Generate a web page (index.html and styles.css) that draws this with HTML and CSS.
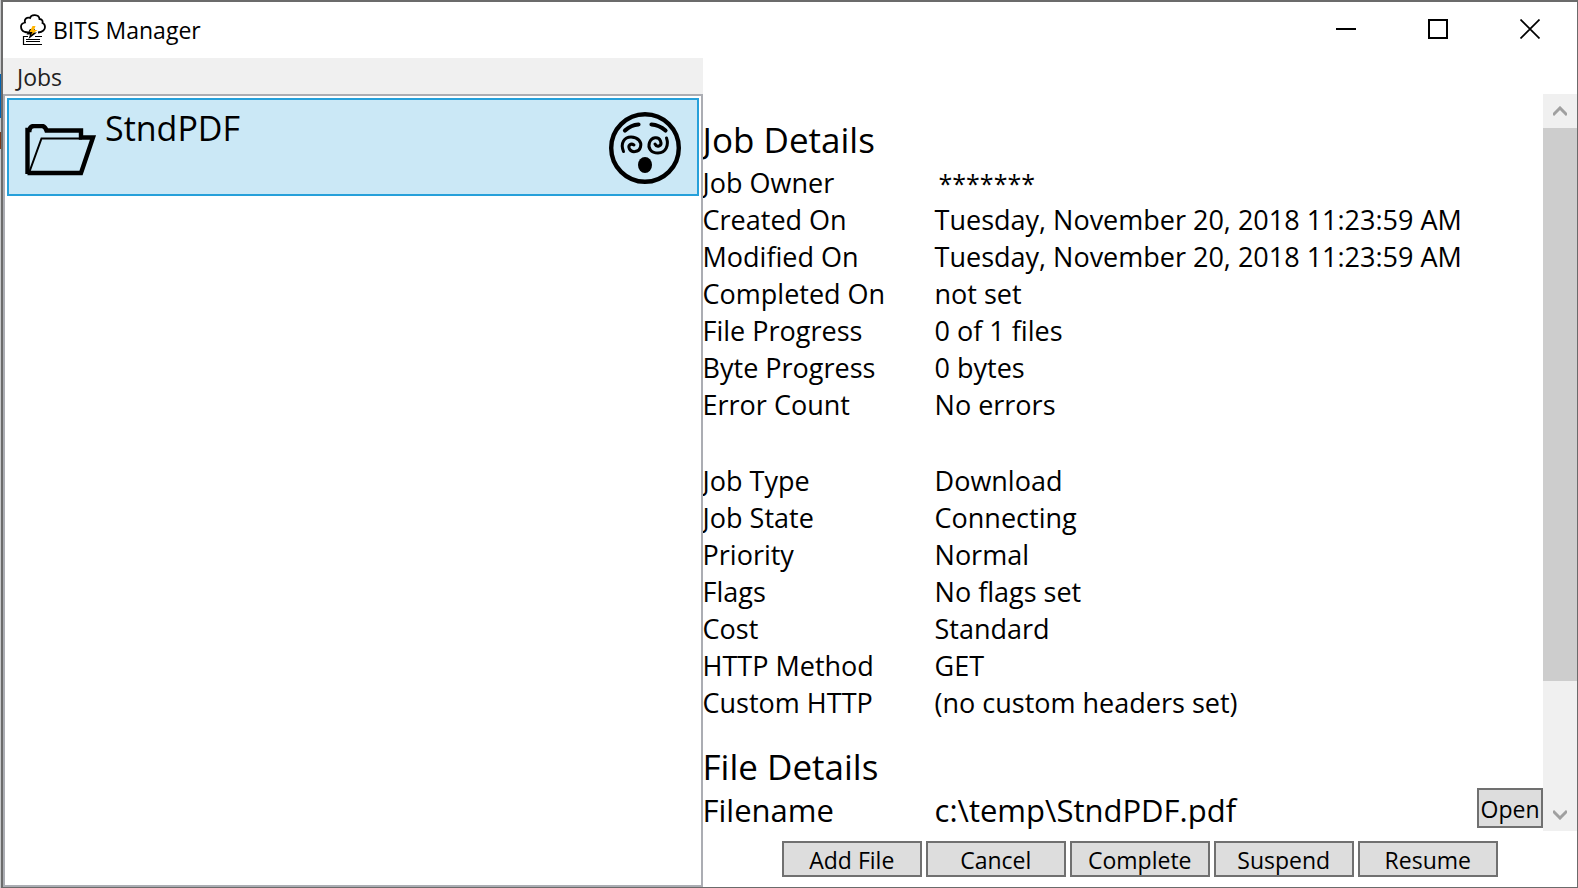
FILE: index.html
```html
<!DOCTYPE html>
<html lang="en">
<head>
<meta charset="utf-8">
<title>BITS Manager</title>
<link rel="stylesheet" href="styles.css">
</head>
<body>
<div class="window">
  <header class="titlebar">
    <svg class="app-icon" viewBox="0 0 26 32" aria-hidden="true">
      <path d="M8 18.500L5 18C2 17 1 15 1 12.500C1 10 3 9 5 8.500C4 5 7 3 10 4C11 0 19 0 19.500 5C22 5 23 7 22.500 9C25 10 25 12 25 13C25 16 22 18 18 18.500" fill="none" stroke="#000" stroke-width="1.800"/>
      <path d="M10 15L6.500 20.500H10L8.500 25L17 18.500H13L15 15Z" fill="#000"/>
      <path d="M12.500 12H15.500L14 16H17.500L11 21L12.500 18H9.500Z" fill="#ffb400"/>
      <path d="M8 22.500H3.500V30.500H22M15 22.500H22M6 25.500H20M6 27.500H20" fill="none" stroke="#000" stroke-width="1.200"/>
    </svg>
    <h1 class="app-title">BITS Manager</h1>
    <div class="caption-buttons">
      <button class="caption" aria-label="Minimize"><svg viewBox="0 0 20 20"><path d="M0 10H20" stroke="#000" stroke-width="2"/></svg></button>
      <button class="caption" aria-label="Maximize"><svg viewBox="0 0 20 20"><path d="M1 1H19V19H1Z" fill="none" stroke="#000" stroke-width="2"/></svg></button>
      <button class="caption" aria-label="Close"><svg viewBox="0 0 20 20"><path d="M.5 .5L19.500 19.500M19.500 .5L.5 19.500" stroke="#000" stroke-width="1.700"/></svg></button>
    </div>
  </header>
  <main class="content">
    <section class="left">
      <nav class="menu"><button class="menu-item">Jobs</button></nav>
      <div class="job-list">
        <button class="job">
          <svg class="folder" viewBox="0 0 72 54" aria-hidden="true">
            <path d="M2.500 50V6H4.500Q5 2 9 2H17Q20 2 21.500 6.500H56V13.500H68L56 49H2.500" fill="none" stroke="#000" stroke-width="4.400"/>
            <path d="M4 49L16.500 14.500H57" fill="none" stroke="#000" stroke-width="2"/>
          </svg>
          <span class="job-name">StndPDF</span>
          <svg class="face" viewBox="0 0 72 72" aria-label="Connecting">
            <g fill="none" stroke="#000" stroke-linecap="round">
              <circle cx="36" cy="36" r="33.800" stroke-width="4.400"/>
              <path d="M16 18.500Q22 13 29.500 12.500M42.500 12.500Q50 13 56.500 18.500" stroke-width="4.200"/>
              <path d="M14.500 39.500C11 31 15.500 25 22 25C29 25 33 30 31.500 35C30 40.500 22.500 41 20.500 37C18.500 33 22 31 25 33" stroke-width="3"/>
              <path d="M57.500 26C60 33 57 41 49 41C42 41 38.500 36 40.500 30.500C42.500 25 49.500 24 51.500 29C53.500 34 48 36 46 32" stroke-width="3"/>
            </g>
            <ellipse cx="36" cy="53" rx="7" ry="8" fill="#000"/>
          </svg>
        </button>
      </div>
    </section>
    <section class="right">
      <div class="scroller">
        <div class="details">
          <h2 class="heading">Job Details</h2>
          <dl class="fields">
            <dt>Job Owner</dt><dd class="masked">*******</dd>
            <dt>Created On</dt><dd>Tuesday, November 20, 2018 11:23:59 AM</dd>
            <dt>Modified On</dt><dd>Tuesday, November 20, 2018 11:23:59 AM</dd>
            <dt>Completed On</dt><dd>not set</dd>
            <dt>File Progress</dt><dd>0 of 1 files</dd>
            <dt>Byte Progress</dt><dd>0 bytes</dd>
            <dt>Error Count</dt><dd>No errors</dd>
          </dl>
          <dl class="fields more">
            <dt>Job Type</dt><dd>Download</dd>
            <dt>Job State</dt><dd>Connecting</dd>
            <dt>Priority</dt><dd>Normal</dd>
            <dt>Flags</dt><dd>No flags set</dd>
            <dt>Cost</dt><dd>Standard</dd>
            <dt>HTTP Method</dt><dd>GET</dd>
            <dt>Custom HTTP</dt><dd>(no custom headers set)</dd>
          </dl>
          <h2 class="heading">File Details</h2>
          <div class="file">
            <span>Filename</span><span>c:\temp\StndPDF.pdf</span>
            <button class="btn open">Open</button>
          </div>
        </div>
        <div class="scrollbar">
          <button class="arrow" aria-label="Scroll up"><svg viewBox="0 0 14 11"><path d="M0 9L7 2L14 9" /></svg></button>
          <div class="track"><div class="thumb"></div></div>
          <button class="arrow" aria-label="Scroll down"><svg viewBox="0 0 14 11"><path d="M0 2L7 9L14 2" /></svg></button>
        </div>
      </div>
      <footer class="actions">
        <button class="btn">Add File</button>
        <button class="btn">Cancel</button>
        <button class="btn">Complete</button>
        <button class="btn">Suspend</button>
        <button class="btn">Resume</button>
      </footer>
    </section>
  </main>
</div>
</body>
</html>
```
FILE: styles.css
```css
* { box-sizing: border-box; }
body {
  margin: 0;
  padding-left: 1px;
  background: linear-gradient(#c8cacc 74px, #0063b1 74px 118px, #c8cacc 118px 132px, #7a3a1c 132px 149px, #c8cacc 149px);
  font-family: "Open Sans", "Noto Sans", sans-serif;
  color: #000;
}
button {
  font: inherit;
  color: inherit;
  border: 0;
  padding: 0;
  background: none;
}
.window {
  display: flex;
  flex-direction: column;
  height: 100vh;
  background: #fff;
  border: solid #6b6b6b;
  border-width: 2px 1px 1px 2px;
}
.titlebar {
  display: flex;
  align-items: center;
  height: 56px;
  flex: none;
  padding-left: 17px;
}
.app-icon { width: 26px; height: 32px; margin-right: 7px; }
.app-title { margin: 0; font-size: 23px; font-weight: 400; }
.caption-buttons { display: flex; margin-left: auto; padding-right: 1px; }
.caption {
  display: flex;
  align-items: center;
  justify-content: center;
  width: 92px;
  height: 56px;
  padding-bottom: 2px;
}
.caption svg { width: 20px; height: 20px; }
.content {
  display: grid;
  grid-template-columns: 4fr 5fr;
  flex: 1;
  min-height: 0;
}
.left, .right { display: flex; flex-direction: column; min-width: 0; min-height: 0; }
.menu { height: 36px; background: #f0f0f0; padding-left: 14px; flex: none; }
.menu-item { font-size: 23px; line-height: 38px; color: #212121; }
.job-list { flex: 1; border: 2px solid #abadb3; padding: 2px; }
.job {
  display: flex;
  align-items: flex-start;
  width: 100%;
  height: 98px;
  padding: 0 16px;
  border: 2px solid #26a0da;
  background: #cbe8f6;
  text-align: left;
}
.folder { width: 72px; height: 54px; margin: 24px 8px 0 0; }
.job-name { flex: 1; font-size: 34px; line-height: 56px; }
.face { width: 72px; height: 72px; margin-top: 12px; }
.right { padding-top: 36px; }
.scroller { display: flex; flex: 1; min-height: 0; }
.details { flex: 1; min-width: 0; overflow: hidden; }
.heading {
  margin: 24px 0 0;
  font-size: 35px;
  font-weight: 400;
  line-height: 43px;
}
.fields {
  display: grid;
  grid-template-columns: 232px 1fr;
  grid-auto-rows: 37px;
  margin: 3px 0 0;
  font-size: 27px;
  line-height: 37px;
}
.more { margin-top: 39px; }
.fields dd { margin: 0; }
.fields .masked { padding: 2px 0 0 4px; font-size: 25px; line-height: 34px; }
.file {
  display: grid;
  grid-template-columns: 232px 1fr 66px;
  font-size: 31px;
  line-height: 44px;
}
.btn {
  width: 140px;
  height: 36px;
  padding-top: 2px;
  border: 2px solid #707070;
  background: #ddd;
  font-size: 23px;
  line-height: 30px;
}
.open { width: 66px; height: 40px; }
.scrollbar {
  display: flex;
  flex-direction: column;
  width: 34px;
  background: #f0f0f0;
}
.arrow { display: flex; align-items: center; justify-content: center; height: 34px; }
.arrow svg { width: 14px; height: 11px; fill: none; stroke: #a0a0a0; stroke-width: 3; }
.track { flex: 1; }
.thumb { height: 82.6%; background: #cdcdcd; }
.actions {
  display: flex;
  justify-content: center;
  gap: 4px;
  padding: 10px 0;
}
```
